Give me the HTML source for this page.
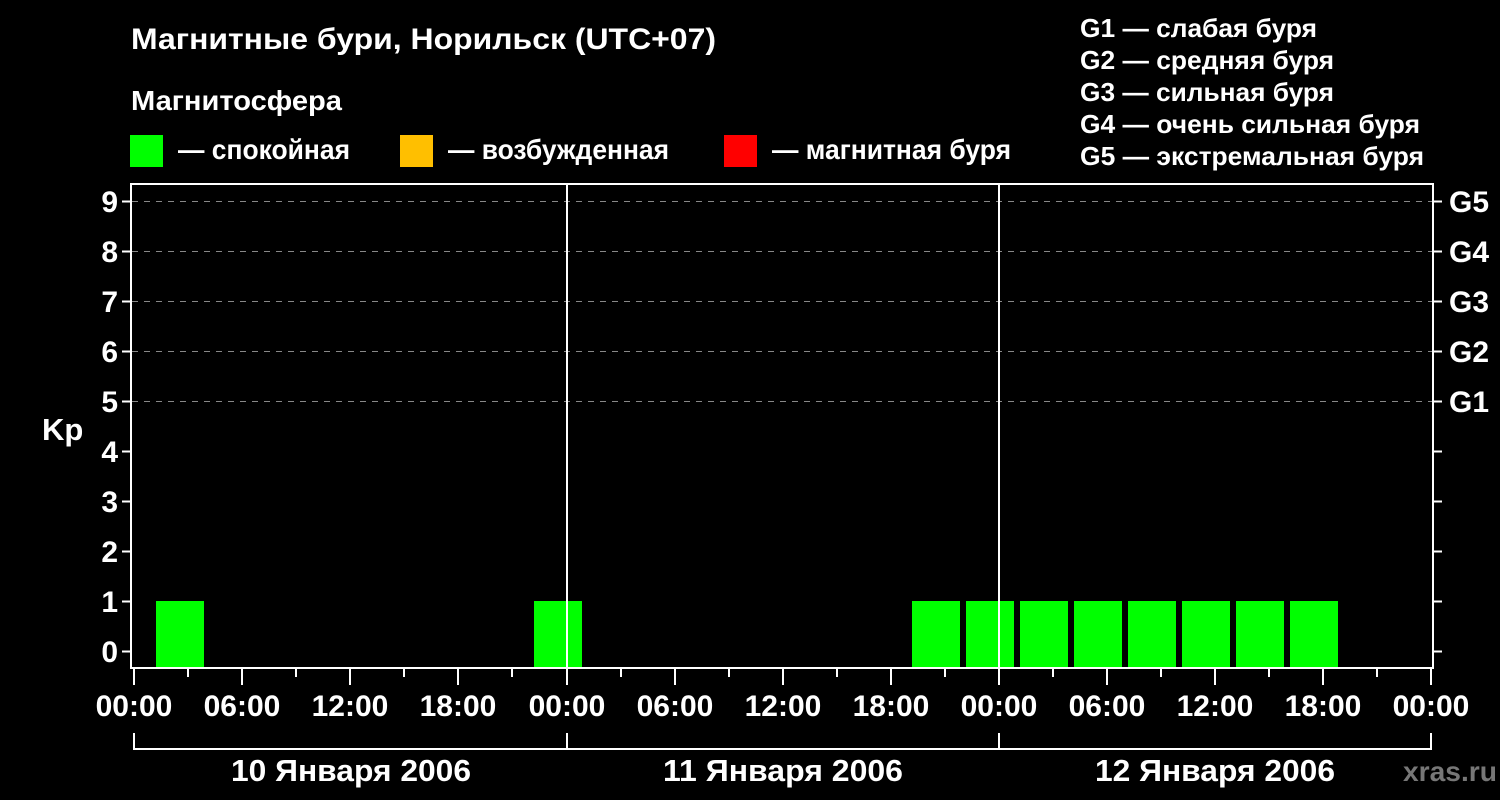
<!DOCTYPE html>
<html><head><meta charset="utf-8"><style>html,body{margin:0;background:#000;}svg{display:block}</style></head>
<body>
<svg width="1500" height="800" viewBox="0 0 1500 800" xmlns="http://www.w3.org/2000/svg" font-family="Liberation Sans, sans-serif" font-weight="bold" fill="#fff">
<rect width="1500" height="800" fill="#000"/>
<text x="131" y="49" font-size="30" textLength="585" lengthAdjust="spacingAndGlyphs">Магнитные бури, Норильск (UTC+07)</text>
<text x="131" y="110" font-size="28" textLength="211" lengthAdjust="spacingAndGlyphs">Магнитосфера</text>
<rect x="130" y="135" width="33" height="32" fill="#00ff00"/>
<text x="178" y="159" font-size="28" textLength="172" lengthAdjust="spacingAndGlyphs">— спокойная</text>
<rect x="400" y="135" width="33" height="32" fill="#ffbf00"/>
<text x="448" y="159" font-size="28" textLength="221" lengthAdjust="spacingAndGlyphs">— возбужденная</text>
<rect x="724" y="135" width="33" height="32" fill="#ff0000"/>
<text x="772" y="159" font-size="28" textLength="239" lengthAdjust="spacingAndGlyphs">— магнитная буря</text>
<g font-size="26">
<text x="1080" y="37" textLength="237" lengthAdjust="spacingAndGlyphs">G1 — слабая буря</text>
<text x="1080" y="69" textLength="254" lengthAdjust="spacingAndGlyphs">G2 — средняя буря</text>
<text x="1080" y="101" textLength="254" lengthAdjust="spacingAndGlyphs">G3 — сильная буря</text>
<text x="1080" y="133" textLength="340" lengthAdjust="spacingAndGlyphs">G4 — очень сильная буря</text>
<text x="1080" y="165" textLength="344" lengthAdjust="spacingAndGlyphs">G5 — экстремальная буря</text>
</g>
<g stroke="#888" stroke-width="1" stroke-dasharray="6,6">
<line x1="132" y1="201.5" x2="1433" y2="201.5"/>
<line x1="132" y1="251.5" x2="1433" y2="251.5"/>
<line x1="132" y1="301.5" x2="1433" y2="301.5"/>
<line x1="132" y1="351.5" x2="1433" y2="351.5"/>
<line x1="132" y1="401.5" x2="1433" y2="401.5"/>
</g>
<g fill="#00ff00">
<rect x="156" y="601" width="48" height="67"/>
<rect x="534" y="601" width="48" height="67"/>
<rect x="912" y="601" width="48" height="67"/>
<rect x="966" y="601" width="48" height="67"/>
<rect x="1020" y="601" width="48" height="67"/>
<rect x="1074" y="601" width="48" height="67"/>
<rect x="1128" y="601" width="48" height="67"/>
<rect x="1182" y="601" width="48" height="67"/>
<rect x="1236" y="601" width="48" height="67"/>
<rect x="1290" y="601" width="48" height="67"/>
</g>
<g stroke="#fff" stroke-width="2" fill="none">
<rect x="131" y="184" width="1302" height="484"/>
<line x1="567" y1="184" x2="567" y2="668"/>
<line x1="999" y1="184" x2="999" y2="668"/>
<path d="M122 201.5H131M122 251.5H131M122 301.5H131M122 351.5H131M122 401.5H131M122 451.5H131M122 501.5H131M122 551.5H131M122 601.5H131M122 651.5H131"/>
<path d="M1433 201.5H1442M1433 251.5H1442M1433 301.5H1442M1433 351.5H1442M1433 401.5H1442M1433 451.5H1442M1433 501.5H1442M1433 551.5H1442M1433 601.5H1442M1433 651.5H1442"/>
<path d="M134 668V685M188 668V677M242 668V685M296 668V677M350 668V685M404 668V677M458 668V685M512 668V677M567 668V685M621 668V677M675 668V685M729 668V677M783 668V685M837 668V677M891 668V685M945 668V677M999 668V685M1053 668V677M1107 668V685M1161 668V677M1215 668V685M1269 668V677M1323 668V685M1377 668V677M1431 668V685"/>
<path d="M134 733V749H1431V733M567 733V749M999 733V749"/>
</g>
<g font-size="30" text-anchor="end">
<text x="118" y="212">9</text><text x="118" y="262">8</text><text x="118" y="312">7</text><text x="118" y="362">6</text><text x="118" y="412">5</text><text x="118" y="462">4</text><text x="118" y="512">3</text><text x="118" y="562">2</text><text x="118" y="612">1</text><text x="118" y="662">0</text>
</g>
<g font-size="30">
<text x="1449" y="212">G5</text><text x="1449" y="262">G4</text><text x="1449" y="312">G3</text><text x="1449" y="362">G2</text><text x="1449" y="412">G1</text>
<text x="42" y="440" font-size="31">Kp</text>
</g>
<g font-size="30" text-anchor="middle">
<text x="134" y="716">00:00</text><text x="242" y="716">06:00</text><text x="350" y="716">12:00</text><text x="458" y="716">18:00</text>
<text x="567" y="716">00:00</text><text x="675" y="716">06:00</text><text x="783" y="716">12:00</text><text x="891" y="716">18:00</text>
<text x="999" y="716">00:00</text><text x="1107" y="716">06:00</text><text x="1215" y="716">12:00</text><text x="1323" y="716">18:00</text>
<text x="1431" y="716">00:00</text>
<text x="351" y="781" font-size="31" textLength="240" lengthAdjust="spacingAndGlyphs">10 Января 2006</text>
<text x="783" y="781" font-size="31" textLength="240" lengthAdjust="spacingAndGlyphs">11 Января 2006</text>
<text x="1215" y="781" font-size="31" textLength="240" lengthAdjust="spacingAndGlyphs">12 Января 2006</text>
</g>
<text x="1403" y="781" font-size="28" fill="#777" textLength="94" lengthAdjust="spacingAndGlyphs">xras.ru</text>
</svg>
</body></html>
